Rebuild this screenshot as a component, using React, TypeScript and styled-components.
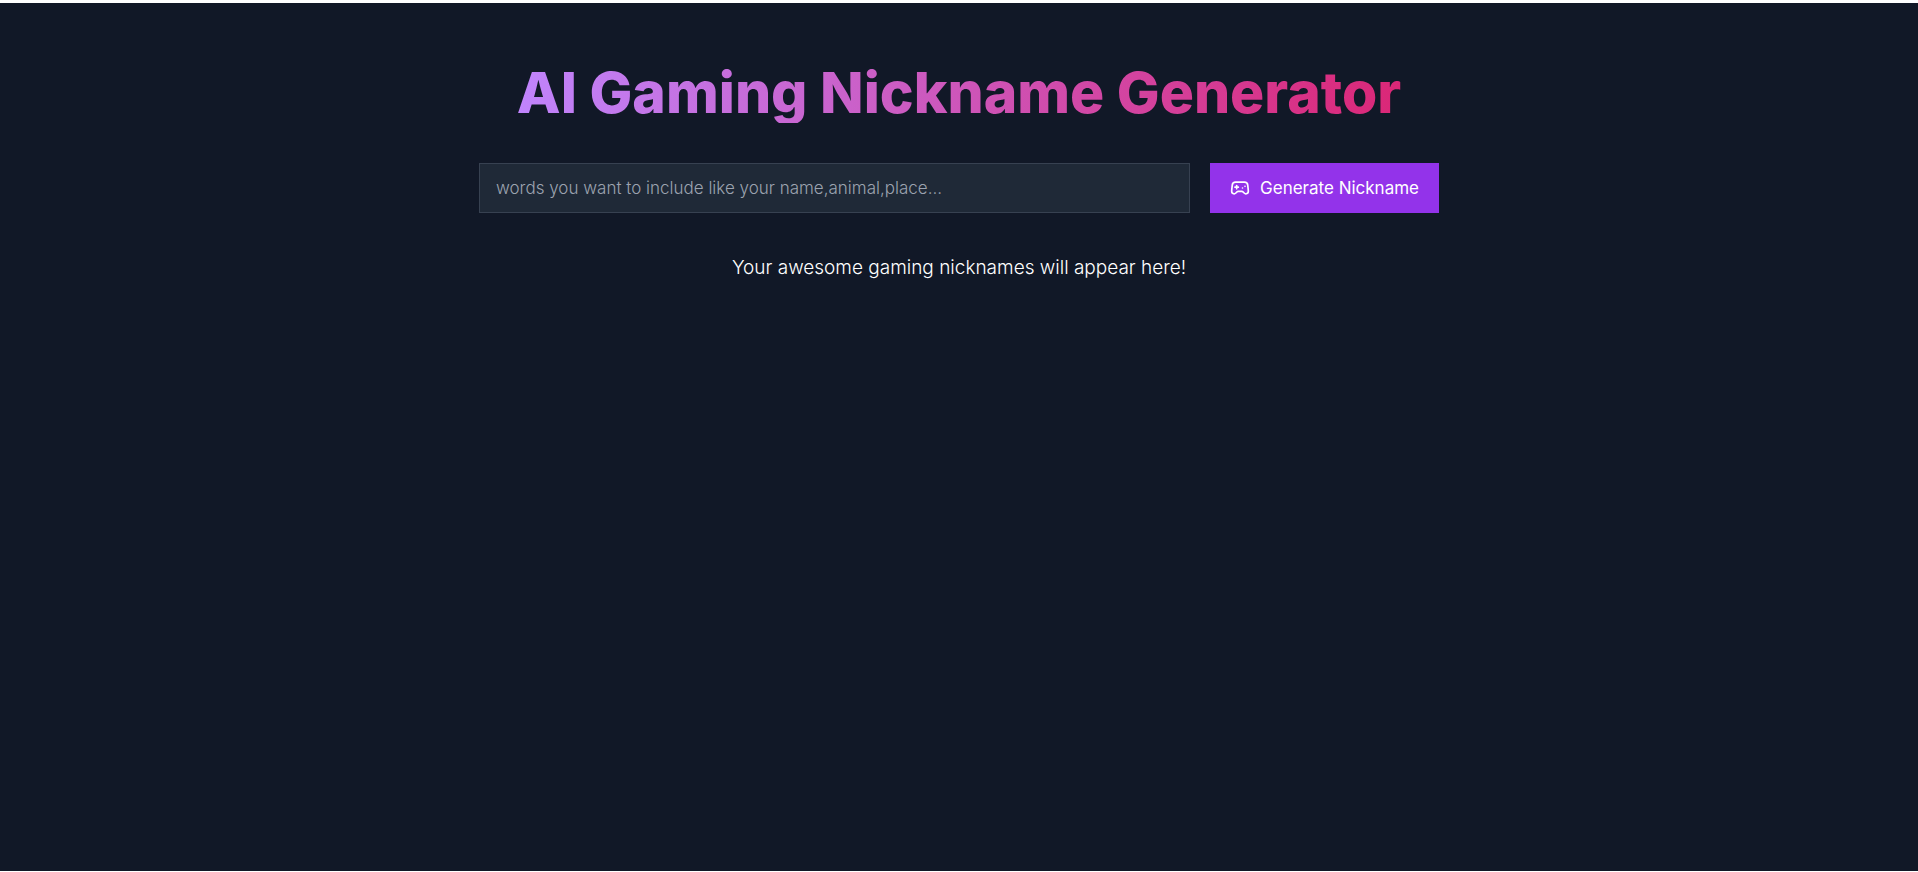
import React from "react";
import styled, { createGlobalStyle } from "styled-components";
import { Gamepad2 } from "lucide-react";

const GlobalStyle = createGlobalStyle`
  *, *::before, *::after { box-sizing: border-box; }
  body {
    margin: 0;
    background: #fff;
    font-family: Inter, "Liberation Sans", sans-serif;
  }
`;

const Page = styled.main`
  display: flex;
  flex-direction: column;
  align-items: center;
  min-height: calc(100vh - 4px);
  margin-top: 3px;
  padding: 60px 16px;
  background: #111827;
  color: #fff;
`;

const Title = styled.h1`
  margin: 0 0 40px;
  font-size: 57px;
  line-height: 60px;
  font-weight: 800;
  text-align: center;
  background: linear-gradient(to right, #c084fc, #db2777);
  background-clip: text;
  color: transparent;
`;

const Form = styled.form`
  display: flex;
  gap: 20px;
  width: 100%;
  max-width: 960px;
`;

const Field = styled.input`
  flex: 1;
  min-width: 0;
  height: 50px;
  padding: 0 16px;
  border: 1px solid #374151;
  border-radius: 0;
  background: #1f2937;
  color: #fff;
  font: 300 17px/28px Inter, "Liberation Sans", sans-serif;
  &::placeholder { color: #9ca3af; opacity: 1; }
`;

const Submit = styled.button`
  display: flex;
  align-items: center;
  gap: 10px;
  height: 50px;
  padding: 0 20px;
  border: 0;
  background: #9333ea;
  color: #fff;
  font: 400 17px/28px Inter, "Liberation Sans", sans-serif;
  white-space: nowrap;
  cursor: pointer;
`;

const Message = styled.p`
  margin: 40px 0 0;
  font-size: 19px;
  line-height: 30px;
  font-weight: 300;
`;

export default function App() {
  return (
    <>
      <GlobalStyle />
      <Page>
        <Title>AI Gaming Nickname Generator</Title>
        <Form onSubmit={(e) => e.preventDefault()}>
          <Field aria-label="Words to include" placeholder="words you want to include like your name,animal,place..." />
          <Submit type="submit">
            <Gamepad2 size={20} aria-hidden />
            Generate Nickname
          </Submit>
        </Form>
        <Message>Your awesome gaming nicknames will appear here!</Message>
      </Page>
    </>
  );
}
